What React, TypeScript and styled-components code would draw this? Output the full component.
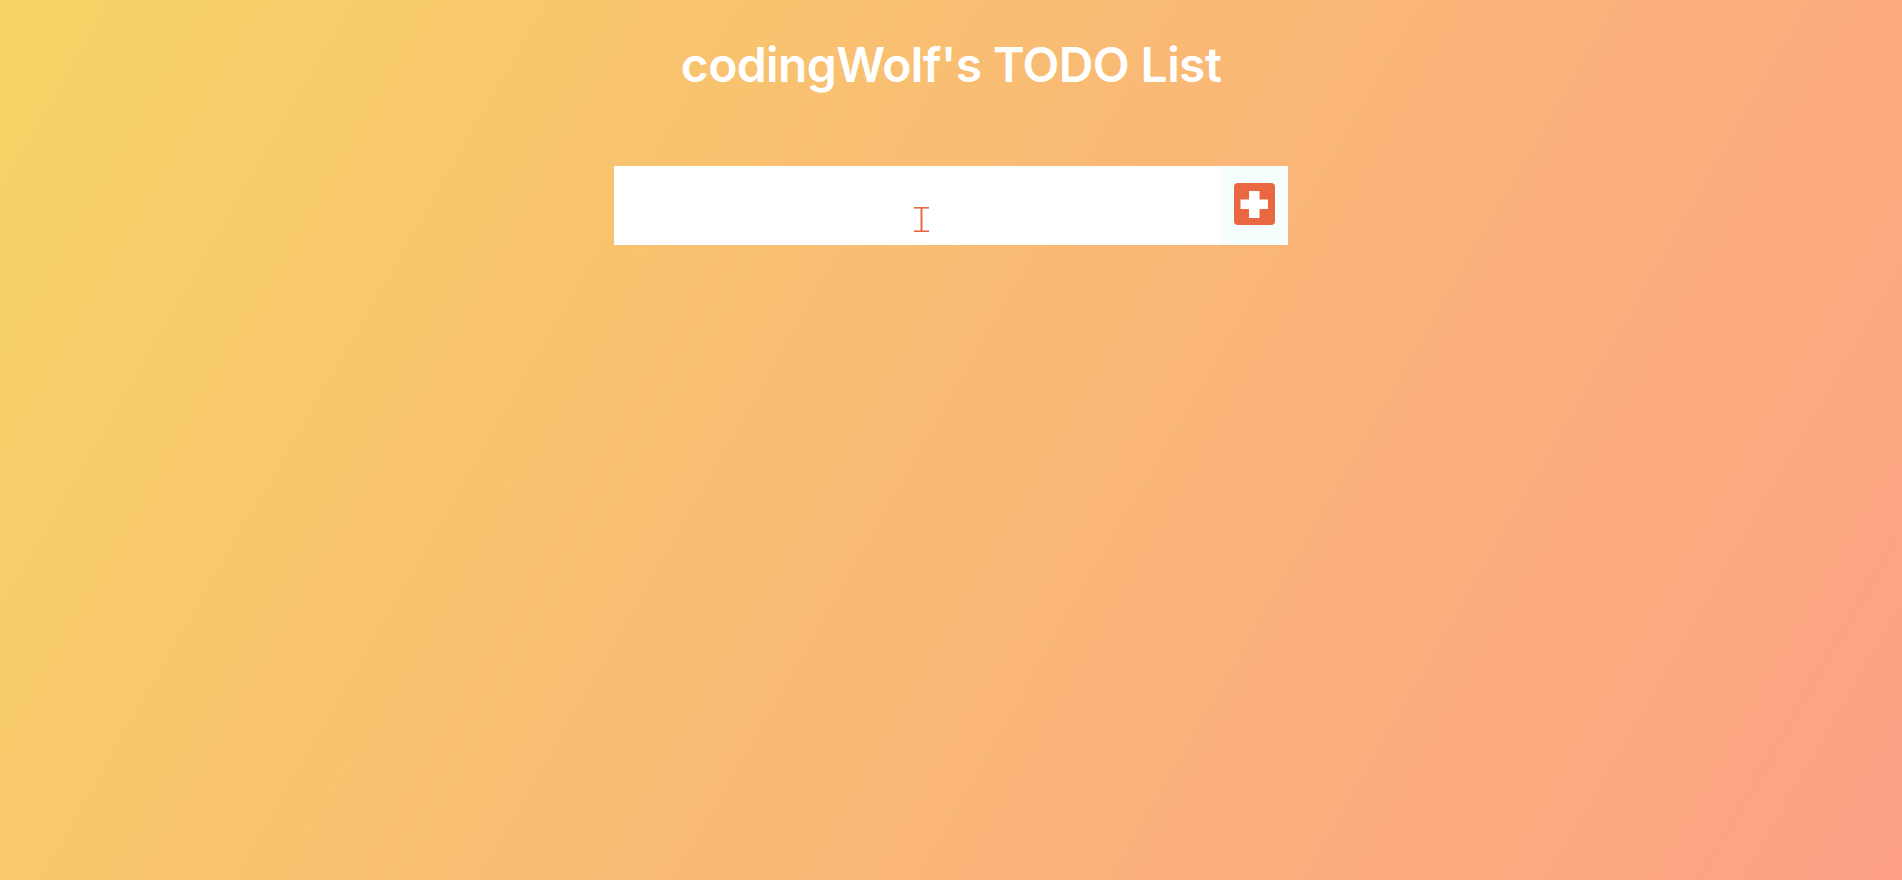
import React from "react";
import styled, { createGlobalStyle } from "styled-components";

const Global = createGlobalStyle`
  * { box-sizing: border-box; }
  html, body { margin: 0; padding: 0; }
  body {
    min-height: 100vh;
    background-image: linear-gradient(120deg, #f6d365 0%, #fda085 100%);
    font-family: Inter, "Noto Sans", sans-serif;
    color: white;
  }
`;

const Page = styled.div`
  min-height: 100vh;
  display: flex;
  flex-direction: column;
  align-items: center;
`;

const Header = styled.header`
  padding-top: 41px;
  display: flex;
  justify-content: center;
`;

const Title = styled.h1`
  margin: 0;
  font-family: Inter, "Noto Sans", sans-serif;
  font-weight: 600;
  font-size: 48px;
  line-height: 48px;
  letter-spacing: -0.6px;
  color: #ffffff;
`;

const Form = styled.form`
  margin-top: 77px;
  display: flex;
  position: relative;
`;

const Input = styled.input`
  width: 607px;
  height: 79px;
  border: none;
  outline: none;
  background: #ffffff;
  padding: 0 8px;
  font-size: 32px;
  font-family: Inter, sans-serif;
`;

const AddButton = styled.button`
  width: 67px;
  height: 79px;
  border: none;
  background: #f7fffe;
  display: flex;
  align-items: flex-start;
  padding: 17px 0 0 13px;
  cursor: pointer;
`;

const Cursor = styled.svg`
  position: absolute;
  left: 300px;
  top: 41px;
  pointer-events: none;
`;

const ACCENT = "#e96842";

export default function App() {
  return (
    <>
      <Global />
      <Page>
        <Header>
          <Title>codingWolf's TODO List</Title>
        </Header>
        <Form onSubmit={(e) => e.preventDefault()}>
          <Input type="text" aria-label="New todo" />
          <AddButton type="submit" aria-label="Add todo">
            <svg width="41" height="42" viewBox="0 0 41 42">
              <rect x="0" y="0" width="41" height="42" rx="4" fill={ACCENT} />
              <rect x="15" y="8" width="10.5" height="27" fill="#ffffff" />
              <rect x="6.5" y="16.5" width="27.5" height="9.5" fill="#ffffff" />
            </svg>
          </AddButton>
          <Cursor width="15" height="25" viewBox="0 0 15 25" aria-hidden="true">
            <rect x="0" y="0" width="15" height="1.6" fill={ACCENT} />
            <rect x="0" y="23.4" width="15" height="1.6" fill={ACCENT} />
            <rect x="6.5" y="0" width="2" height="25" fill={ACCENT} />
          </Cursor>
        </Form>
      </Page>
    </>
  );
}
